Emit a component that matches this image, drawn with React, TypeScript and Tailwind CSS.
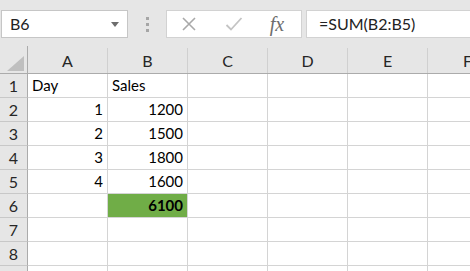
import React from 'react';

const columns = ['A', 'B', 'C', 'D', 'E', 'F'];

type Cell = { v?: string; align?: 'left' | 'right'; bold?: boolean; green?: boolean };

const data: Record<number, Record<string, Cell>> = {
  1: { A: { v: 'Day', align: 'left' }, B: { v: 'Sales', align: 'left' } },
  2: { A: { v: '1', align: 'right' }, B: { v: '1200', align: 'right' } },
  3: { A: { v: '2', align: 'right' }, B: { v: '1500', align: 'right' } },
  4: { A: { v: '3', align: 'right' }, B: { v: '1800', align: 'right' } },
  5: { A: { v: '4', align: 'right' }, B: { v: '1600', align: 'right' } },
  6: { B: { v: '6100', align: 'right', bold: true, green: true } },
};

const rows = [1, 2, 3, 4, 5, 6, 7, 8, 9];

const FormulaBar: React.FC = () => (
  <div className="h-[46px] bg-[#e6e6e6] flex items-start pt-[10px] pl-[1px]">
    {/* Name box */}
    <div className="w-[127px] h-[28px] bg-white border border-[#c6c6c6] flex items-center justify-between pl-[8px] pr-[8px]">
      <span className="text-[16px] text-[#222]">B6</span>
      <svg width="8" height="5" viewBox="0 0 8 5">
        <polygon points="0,0 8,0 4,5" fill="#6d6d6d" />
      </svg>
    </div>
    {/* dots */}
    <div className="w-[38px] h-[28px] flex flex-col items-center justify-center gap-[3px]">
      <div className="w-[3px] h-[3px] bg-[#a6a6a6]" />
      <div className="w-[3px] h-[3px] bg-[#a6a6a6]" />
      <div className="w-[3px] h-[3px] bg-[#a6a6a6]" />
    </div>
    {/* buttons */}
    <div className="w-[136px] h-[28px] bg-white border border-[#d2d2d2] flex items-center">
      <div className="w-[44px] flex justify-center">
        <svg width="16" height="16" viewBox="0 0 16 16">
          <path d="M2 2 L14 14 M14 2 L2 14" stroke="#a9a9a9" strokeWidth="1.6" />
        </svg>
      </div>
      <div className="w-[46px] flex justify-center">
        <svg width="18" height="16" viewBox="0 0 18 16">
          <path d="M1.5 9 L6 13.5 L16.5 2" stroke="#c4c4c4" strokeWidth="1.8" fill="none" />
        </svg>
      </div>
      <div className="flex-1 flex justify-center pr-[4px]">
        <span
          className="text-[20px] italic text-[#6d6d6d] leading-none"
          style={{ fontFamily: '"Liberation Serif", serif' }}
        >
          fx
        </span>
      </div>
    </div>
    {/* formula input */}
    <div className="ml-[4px] flex-1 h-[28px] bg-white border border-[#d2d2d2] border-r-0 flex items-center pl-[12px]">
      <span className="text-[16px] text-[#222]">=SUM(B2:B5)</span>
    </div>
  </div>
);

const App: React.FC = () => {
  return (
    <div
      className="w-[470px] h-[271px] overflow-hidden bg-white"
      style={{ fontFamily: 'Lato, "Open Sans", sans-serif' }}
    >
      <FormulaBar />

      {/* Sheet grid */}
      <div className="grid grid-cols-[28px_repeat(6,80px)] w-[508px]">
        {/* Header row */}
        <div className="h-[28px] bg-[#e6e6e6] border-r border-b border-[#ababab] flex items-end justify-end pr-[3px] pb-[2px]">
          <svg width="17" height="15" viewBox="0 0 17 15">
            <polygon points="17,0 17,15 0,15" fill="#bfbfbf" />
          </svg>
        </div>
        {columns.map((c) => (
          <div key={c} className="h-[28px] bg-[#e6e6e6] border-b border-[#ababab] flex">
            <div className="flex-1 flex items-end justify-center text-[16px] text-[#262626]">{c}</div>
            <div className="w-[1px] mt-[2px] bg-[#d0d0d0]" />
          </div>
        ))}

        {/* Body rows */}
        {rows.map((r) => (
          <React.Fragment key={r}>
            <div className="h-[24px] bg-[#e6e6e6] border-r border-r-[#ababab] border-b border-b-[#c8c8c8] flex items-center justify-center text-[16px] text-[#262626] leading-[24px]">
              {r}
            </div>
            {columns.map((c) => {
              const cell = data[r]?.[c];
              return (
                <div
                  key={c}
                  className={`h-[24px] border-r border-b border-[#d4d4d4] px-[4px] text-[15px] leading-[23px] text-black flex ${
                    cell?.align === 'right' ? 'justify-end' : 'justify-start'
                  } ${cell?.green ? 'bg-[#70ad47]' : ''} ${cell?.bold ? 'font-bold' : ''}`}
                >
                  {cell?.v}
                </div>
              );
            })}
          </React.Fragment>
        ))}
      </div>
    </div>
  );
};

export default App;
